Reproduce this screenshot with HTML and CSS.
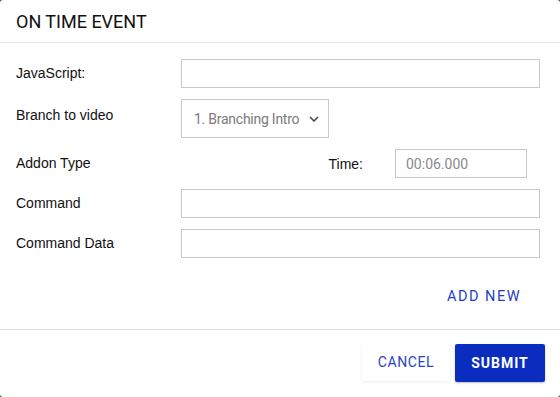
FILE: index.html
```html
<!DOCTYPE html>
<html lang="en">
<head>
    <meta charset="UTF-8">
    <meta name="viewport" content="width=device-width, initial-scale=1.0">
    <title>On Time Event</title>
    <link rel="stylesheet" href="styles.css">
</head>
<body>
    <div class="modal">
        <div class="modal-header">
            <h1>ON TIME EVENT</h1>
        </div>

        <div class="modal-body">
            <div class="form-row">
                <label for="js">JavaScript:</label>
                <input type="text" id="js" class="field">
            </div>
            <div class="form-row tall">
                <label for="branch">Branch to video</label>
                <span class="select-wrap">
                    <select id="branch" class="select">
                        <option>1. Branching Intro</option>
                    </select>
                    <svg class="chevron" width="10" height="6" viewBox="0 0 10 6">
                        <path d="M1 1l4 4 4-4" fill="none" stroke="#444" stroke-width="1.5"/>
                    </svg>
                </span>
            </div>
            <div class="form-row">
                <label>Addon Type</label>
                <div class="time-group">
                    <label for="time" class="time-label">Time:</label>
                    <input type="text" id="time" class="field time-field" value="00:06.000">
                </div>
            </div>
            <div class="form-row">
                <label for="command">Command</label>
                <input type="text" id="command" class="field">
            </div>
            <div class="form-row">
                <label for="commandData">Command Data</label>
                <input type="text" id="commandData" class="field">
            </div>

            <div class="add-row">
                <button class="btn-text">ADD NEW</button>
            </div>
        </div>

        <div class="modal-footer">
            <button class="btn-cancel">CANCEL</button>
            <button class="btn-submit">SUBMIT</button>
        </div>
    </div>
</body>
</html>
```

FILE: styles.css
```css
body {
    margin: 0;
    background: #2f5a2a;
    font-family: "Liberation Sans", Arial, sans-serif;
}

.modal {
    width: 560px;
    height: 397px;
    background: #fff;
    border-radius: 3px;
    display: flex;
    flex-direction: column;
}

.modal-header {
    height: 43px;
    border-bottom: 1px solid #e6e6e6;
    padding: 1px 16px 0;
    box-sizing: border-box;
    display: flex;
    align-items: center;
}

.modal-header h1 {
    margin: 0;
    font-family: Roboto, sans-serif;
    font-size: 18px;
    font-weight: 400;
    color: #111;
}

.modal-body {
    padding: 16px 20px 0 16px;
    height: 287px;
    box-sizing: border-box;
    border-bottom: 1px solid #e2e2e2;
}

.form-row {
    display: flex;
    align-items: flex-start;
    margin-bottom: 11px;
}

.form-row > label {
    width: 165px;
    flex-shrink: 0;
    line-height: 29px;
    font-size: 14px;
    color: #111;
}

.form-row.tall > label {
    padding-top: 2px;
}

.field {
    flex: 1;
    height: 29px;
    box-sizing: border-box;
    border: 1px solid #c9c9c9;
    border-radius: 0;
    padding: 0 12px;
    font-family: Roboto, sans-serif;
    font-size: 14px;
    color: #8a8a8a;
    outline: none;
}

.select-wrap {
    position: relative;
    display: inline-block;
}

.select {
    appearance: none;
    width: 148px;
    height: 39px;
    box-sizing: border-box;
    border: 1px solid #c9c9c9;
    border-radius: 0;
    background: #fff;
    padding: 0 12px;
    font-family: Roboto, sans-serif;
    font-size: 14px;
    letter-spacing: -0.25px;
    color: #7a7a7a;
}

.chevron {
    position: absolute;
    right: 10px;
    top: 17px;
}

.time-group {
    flex: 1;
    display: flex;
    align-items: center;
    justify-content: flex-end;
    padding-right: 13px;
}

.time-label {
    font-size: 14px;
    color: #111;
    margin-right: 32px;
}

.time-field {
    flex: none;
    width: 132px;
    padding: 0 10px;
}

.add-row {
    display: flex;
    justify-content: flex-end;
    margin-top: 30px;
}

.btn-text {
    border: none;
    background: none;
    padding: 0;
    margin-right: 19px;
    font-family: Roboto, sans-serif;
    font-size: 14.5px;
    letter-spacing: 1.5px;
    color: #1b3dc9;
}

.modal-footer {
    flex: 1;
    display: flex;
    justify-content: flex-end;
    align-items: flex-start;
    padding: 12px 15px 0 0;
    gap: 5px;
}

.btn-cancel {
    width: 88px;
    height: 39px;
    border: none;
    background: #fff;
    box-shadow: 0 1px 3px rgba(0, 0, 0, 0.08);
    font-family: Roboto, sans-serif;
    font-size: 14px;
    letter-spacing: 0.6px;
    color: #2a45c8;
}

.btn-submit {
    width: 90px;
    height: 38px;
    margin-top: 2px;
    border: none;
    border-radius: 2px;
    background: #0a2dbf;
    box-shadow: 0 1px 2px rgba(0, 0, 0, 0.25);
    font-family: Roboto, sans-serif;
    font-size: 14px;
    font-weight: 700;
    letter-spacing: 1px;
    color: #fff;
}
```
